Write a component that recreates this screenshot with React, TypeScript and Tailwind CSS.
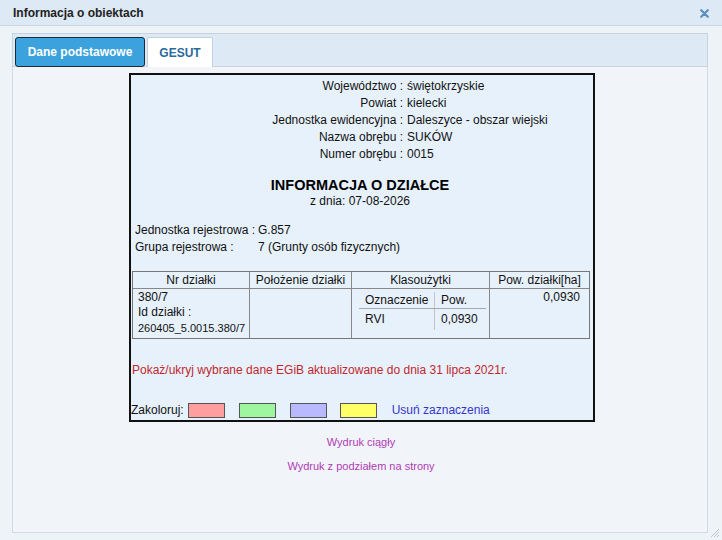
import React from "react";

const rows: [string, string][] = [
  ["Województwo :", "świętokrzyskie"],
  ["Powiat :", "kielecki"],
  ["Jednostka ewidencyjna :", "Daleszyce - obszar wiejski"],
  ["Nazwa obrębu :", "SUKÓW"],
  ["Numer obrębu :", "0015"],
];

export default function App() {
  return (
    <div className="relative w-[722px] h-[540px] overflow-hidden bg-[#eef3f8] font-['Liberation_Sans',Arial,sans-serif] text-[#111]">
      {/* Title bar */}
      <div className="h-[26px] flex items-center justify-between bg-[#dde9f4] border-b border-[#c9d7e4] pl-[13px] pr-[13px]">
        <span className="text-[12px] font-bold text-[#222] leading-none">Informacja o obiektach</span>
        <svg width="9" height="9" viewBox="0 0 9 9" className="mt-[2px]">
          <path d="M1.2 1.2 L7.8 7.8 M7.8 1.2 L1.2 7.8" stroke="#5b8fbf" strokeWidth="2.2" strokeLinecap="round" />
        </svg>
      </div>

      {/* Panel */}
      <div className="ml-[12px] mt-[7px] w-[696px] h-[500px] border border-[#d3dbe3] bg-[#f1f5f9] flex flex-col">
        {/* Tab header */}
        <div className="h-[34px] bg-[#dde9f4] border border-[#c6d3df] -mt-px -mx-px flex items-start pl-[2px] pt-[3px] gap-[2px]">
          <div className="w-[130px] h-[30px] rounded-[3px] border border-[#1c2a36] bg-[#3ba2dd] flex items-center justify-center text-white font-bold text-[12px]">
            Dane podstawowe
          </div>
          <div className="w-[66px] h-[30px] rounded-t-[2px] border border-[#c2d1de] border-b-0 bg-white flex items-center justify-center text-[#2b6a99] font-bold text-[12px]">
            GESUT
          </div>
        </div>

        {/* Info box */}
        <div className="ml-[116px] mt-[6px] w-[466px] h-[349px] border-2 border-[#111] bg-[#e7f1fc] flex flex-col text-[12px]">
          <div className="pt-[3px]">
            {rows.map(([l, v]) => (
              <div key={l} className="flex leading-[17px]">
                <div className="w-[272px] text-right">{l}</div>
                <div className="pl-[4px]">{v}</div>
              </div>
            ))}
          </div>

          <div className="mt-[13px] pr-[4px] text-center font-bold text-[14.5px] leading-[18px] text-black">INFORMACJA O DZIAŁCE</div>
          <div className="pr-[4px] text-center leading-[15px]">z dnia: 07-08-2026</div>

          <div className="mt-[13px] ml-[4px] grid grid-cols-[123px_1fr] leading-[17px]">
            <div>Jednostka rejestrowa :</div>
            <div>G.857</div>
            <div>Grupa rejestrowa :</div>
            <div>7 (Grunty osób fizycznych)</div>
          </div>

          {/* Parcel table */}
          <div className="mt-[15px] ml-[1px] w-[458px] border border-[#777]">
            <div className="grid grid-cols-[117px_102px_138px_99px] h-[17px] border-b border-[#888] leading-[17px]">
              <div className="border-r border-[#888] text-center">Nr działki</div>
              <div className="border-r border-[#888] text-center">Położenie działki</div>
              <div className="border-r border-[#888] text-center">Klasoużytki</div>
              <div className="text-center">Pow. działki[ha]</div>
            </div>
            <div className="grid grid-cols-[117px_102px_138px_99px] h-[49px]">
              <div className="border-r border-[#888] pl-[5px] pt-[1px] leading-[15px]">
                <div>380/7</div>
                <div>Id działki :</div>
                <div className="text-[11px] leading-[16px]">260405_5.0015.380/7</div>
              </div>
              <div className="border-r border-[#888]"></div>
              <div className="border-r border-[#888] pt-[3px]">
                <div className="ml-[7px] w-[127px]">
                  <div className="grid grid-cols-[76px_1fr] border-b border-[#a8a8a8] h-[17px] leading-[16px]">
                    <div className="pl-[6px] border-r border-[#c4c4c4]">Oznaczenie</div>
                    <div className="pl-[6px]">Pow.</div>
                  </div>
                  <div className="grid grid-cols-[76px_1fr] h-[21px] leading-[20px]">
                    <div className="pl-[6px] border-r border-[#c4c4c4]">RVI</div>
                    <div className="pl-[6px]">0,0930</div>
                  </div>
                </div>
              </div>
              <div className="text-right pr-[9px] pt-[1px] leading-[15px]">0,0930</div>
            </div>
          </div>

          <div className="mt-[23px] ml-[1px] leading-[17px] text-[#c1272d]">
            Pokaż/ukryj wybrane dane EGiB aktualizowane do dnia 31 lipca 2021r.
          </div>

          <div className="mt-[23px] flex items-center leading-[17px]">
            <span>Zakoloruj:</span>
            <span className="ml-[4px] w-[37px] h-[15px] border border-[#555] bg-[#ff9e9e]"></span>
            <span className="ml-[14px] w-[37px] h-[15px] border border-[#555] bg-[#9ef79e]"></span>
            <span className="ml-[14px] w-[37px] h-[15px] border border-[#555] bg-[#b9b9ff]"></span>
            <span className="ml-[13px] w-[37px] h-[15px] border border-[#555] bg-[#ffff66]"></span>
            <span className="ml-[15px] text-[#3535c8]">Usuń zaznaczenia</span>
          </div>
        </div>

        <div className="mt-[13px] text-center text-[11px] leading-[14px] text-[#b23bb5] pl-[2px]">Wydruk ciągły</div>
        <div className="mt-[10px] text-center text-[11px] leading-[14px] text-[#b23bb5] pl-[2px]">Wydruk z podziałem na strony</div>
      </div>

      {/* resize grip */}
      <svg className="absolute right-[2px] bottom-[2px]" width="10" height="10" viewBox="0 0 10 10">
        <path d="M9 1 L1 9 M9 4 L4 9 M9 7 L7 9" stroke="#b8c4d0" strokeWidth="1" />
      </svg>
    </div>
  );
}
